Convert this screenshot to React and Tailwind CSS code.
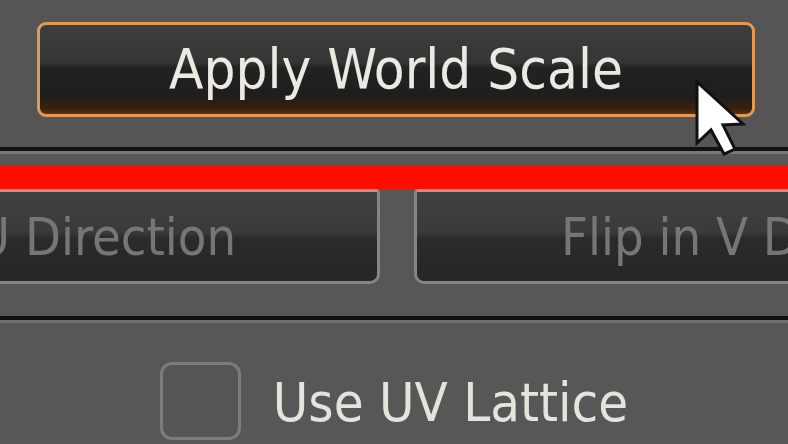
export default function App() {
  const font = {
    fontFamily: '"DejaVu Sans Condensed", "DejaVu Sans", sans-serif',
  };

  return (
    <div
      className="relative w-[788px] h-[444px] overflow-hidden bg-[#555555] font-stretch-condensed"
      style={font}
    >
      {/* top button */}
      <div className="pt-[22px] pl-[37px]">
        <button className="w-[718px] h-[95px] rounded-[9px] border-[3px] border-[#e39a55] bg-[linear-gradient(to_bottom,#3d3d3d_0%,#353535_42%,#222222_48%,#1e1e1e_80%,#3a200c_94%,#5a3210_100%)] flex items-center justify-center pb-[2px]">
          <span className="text-[56px] leading-none text-[#ece8e2]">
            Apply World Scale
          </span>
        </button>
      </div>

      {/* separator */}
      <div className="mt-[30px] h-[4px] bg-[#121212]" />
      <div className="h-[3px] bg-[#7a7a7a]" />

      {/* lower section */}
      <div className="pt-[12px] bg-[#575757]">
        <div className="h-[23px] bg-[#ff0e00]" />
        <div className="flex gap-[34px] ml-[-323px]">
          <button className="w-[703px] shrink-0 h-[95px] rounded-b-[10px] rounded-t-[4px] border-[3px] border-t-[#d88a80] border-[#858585] bg-[linear-gradient(to_bottom,#404040_0%,#3a3a3a_45%,#2b2b2b_52%,#262626_100%)] flex items-center justify-center">
            <span className="text-[52px] leading-none text-[#767676]">
              Flip in U Direction
            </span>
          </button>
          <button className="w-[707px] shrink-0 h-[95px] rounded-b-[10px] rounded-t-[4px] border-[3px] border-t-[#d88a80] border-[#858585] bg-[linear-gradient(to_bottom,#404040_0%,#3a3a3a_45%,#2b2b2b_52%,#262626_100%)] flex items-center justify-center">
            <span className="text-[52px] leading-none text-[#767676]">
              Flip in V Direction
            </span>
          </button>
        </div>

        <div className="mt-[32px] h-[4px] bg-[#121212]" />
        <div className="h-[3px] bg-[#707070]" />

        <div className="pt-[39px] h-[128px] flex justify-center items-start gap-[32px]">
          <div className="w-[81px] h-[78px] shrink-0 rounded-[12px] border-[3px] border-[#7c7c7c] bg-[#555555]" />
          <span className="mt-[14px] text-[54px] leading-none text-[#e6e2dc]">
            Use UV Lattice
          </span>
        </div>
      </div>

      {/* mouse cursor */}
      <svg
        className="absolute left-[695px] top-[80px]"
        width="52"
        height="78"
        viewBox="-2 -2 52 78"
      >
        <polygon
          points="0,0 0,61 14,48 27,72 38,67 26,43 46,42"
          fill="#ffffff"
          stroke="#111111"
          strokeWidth="3"
          strokeLinejoin="miter"
        />
      </svg>
    </div>
  );
}
